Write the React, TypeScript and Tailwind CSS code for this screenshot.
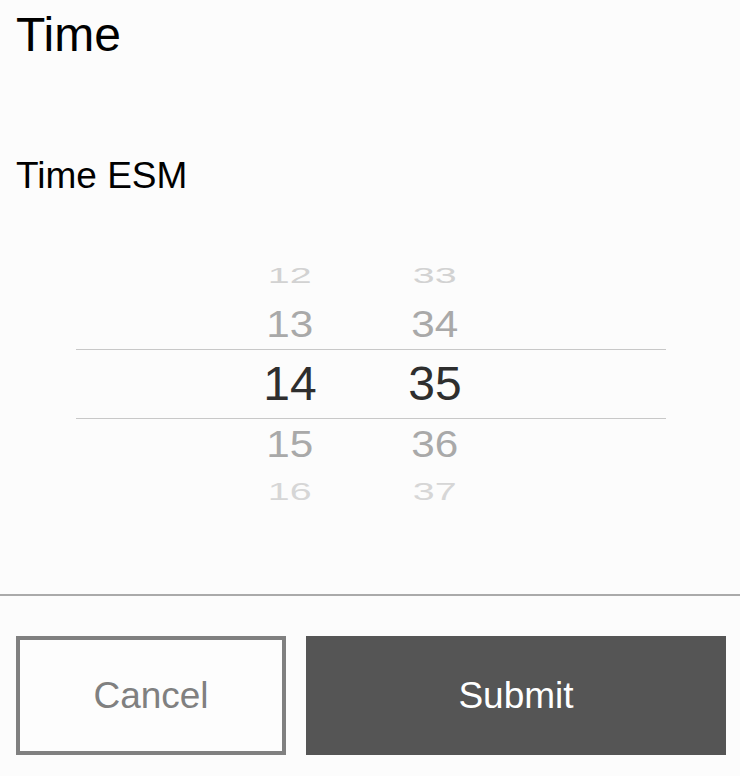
import React from 'react';

type Row = {
  hour: string;
  minute: string;
  height: string;
  color: string;
  scale: string;
};

const upper: Row[] = [
  { hour: '12', minute: '33', height: 'h-[48px]', color: 'text-[#d2d2d2]', scale: 'scale-x-[0.82] scale-y-[0.46]' },
  { hour: '13', minute: '34', height: 'h-[49px]', color: 'text-[#a9a9a9]', scale: 'scale-x-[0.88] scale-y-[0.75]' },
];

const lower: Row[] = [
  { hour: '15', minute: '36', height: 'h-[52px]', color: 'text-[#a9a9a9]', scale: 'scale-x-[0.88] scale-y-[0.75]' },
  { hour: '16', minute: '37', height: 'h-[42px]', color: 'text-[#d6d6d6]', scale: 'scale-x-[0.82] scale-y-[0.5]' },
];

const WheelRow = ({ row }: { row: Row }) => (
  <div className={`flex items-center pl-[164px] gap-[45px] ${row.height} ${row.color}`}>
    <div className="w-[100px] flex justify-center">
      <span className={`inline-block ${row.scale}`}>{row.hour}</span>
    </div>
    <div className="w-[100px] flex justify-center">
      <span className={`inline-block ${row.scale}`}>{row.minute}</span>
    </div>
  </div>
);

const App = () => {
  return (
    <div className="w-[740px] h-[776px] bg-[#fcfcfc] text-black overflow-hidden font-['Liberation_Sans',Arial,sans-serif]">
      <h1 className="pl-4 pt-[11px] text-[48px] leading-none">Time</h1>

      <p className="pl-4 mt-[98px] text-[37px] leading-none">Time ESM</p>

      {/* time wheel */}
      <div className="mt-[58px] ml-[76px] w-[590px] text-[48px] leading-none">
        {upper.map((row) => (
          <WheelRow key={row.hour} row={row} />
        ))}
        <div className="flex items-center pl-[164px] gap-[45px] h-[70px] border-y border-[#c8c8c8] text-[#2e2e2e]">
          <div className="w-[100px] text-center">14</div>
          <div className="w-[100px] text-center">35</div>
        </div>
        {lower.map((row) => (
          <WheelRow key={row.hour} row={row} />
        ))}
      </div>

      <div className="mt-[81px] h-[2px] bg-[#aaaaaa]" />

      <div className="flex gap-5 pl-4 pr-[14px] mt-[40px]">
        <button className="w-[270px] h-[119px] border-4 border-[#808080] bg-[#fdfdfd] text-[#808080] text-[37px] leading-none flex items-center justify-center">
          Cancel
        </button>
        <button className="flex-1 h-[119px] bg-[#555555] text-white text-[37px] leading-none flex items-center justify-center">
          Submit
        </button>
      </div>
    </div>
  );
};

export default App;
